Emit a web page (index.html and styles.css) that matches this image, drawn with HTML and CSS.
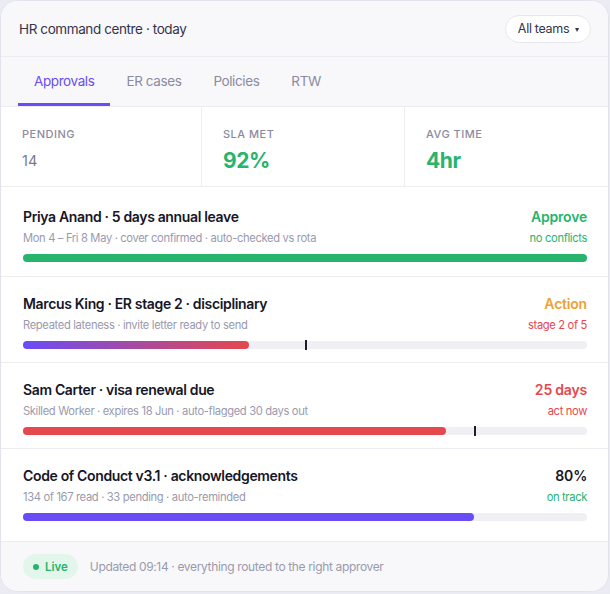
FILE: index.html
```html
<!DOCTYPE html>
<html>
<head>
  <meta charset="utf-8">
  <title>HR command centre</title>
  <link rel="stylesheet" href="styles.css">
</head>
<body>
  <div class="card">
    <div class="topbar">
      <span class="topbar-title">HR command centre · today</span>
      <button class="team-pill">All teams <span class="caret">▾</span></button>
    </div>

    <ul class="tabs">
      <li class="active">Approvals</li>
      <li>ER cases</li>
      <li>Policies</li>
      <li>RTW</li>
    </ul>

    <div class="stats">
      <div class="stat">
        <div class="stat-label">Pending</div>
        <div class="stat-value muted">14</div>
      </div>
      <div class="stat">
        <div class="stat-label">SLA met</div>
        <div class="stat-value good">92%</div>
      </div>
      <div class="stat">
        <div class="stat-label">Avg time</div>
        <div class="stat-value good">4hr</div>
      </div>
    </div>

    <div class="items">
      <div class="item">
        <div class="item-head">
          <span class="item-title">Priya Anand · 5 days annual leave</span>
          <span class="item-action green">Approve</span>
        </div>
        <div class="item-sub">
          <span>Mon 4 – Fri 8 May · cover confirmed · auto-checked vs rota</span>
          <span class="item-note green">no conflicts</span>
        </div>
        <div class="track"><div class="fill fill-green" style="width:100%"></div></div>
      </div>

      <div class="item">
        <div class="item-head">
          <span class="item-title">Marcus King · ER stage 2 · disciplinary</span>
          <span class="item-action orange">Action</span>
        </div>
        <div class="item-sub">
          <span>Repeated lateness · invite letter ready to send</span>
          <span class="item-note red">stage 2 of 5</span>
        </div>
        <div class="track">
          <div class="fill fill-grad" style="width:40%"></div>
          <div class="marker" style="left:50%"></div>
        </div>
      </div>

      <div class="item">
        <div class="item-head">
          <span class="item-title">Sam Carter · visa renewal due</span>
          <span class="item-action red">25 days</span>
        </div>
        <div class="item-sub">
          <span>Skilled Worker · expires 18 Jun · auto-flagged 30 days out</span>
          <span class="item-note red">act now</span>
        </div>
        <div class="track">
          <div class="fill fill-red" style="width:75%"></div>
          <div class="marker" style="left:80%"></div>
        </div>
      </div>

      <div class="item">
        <div class="item-head">
          <span class="item-title">Code of Conduct v3.1 · acknowledgements</span>
          <span class="item-action dark">80%</span>
        </div>
        <div class="item-sub">
          <span>134 of 167 read · 33 pending · auto-reminded</span>
          <span class="item-note green">on track</span>
        </div>
        <div class="track"><div class="fill fill-purple" style="width:80%"></div></div>
      </div>
    </div>

    <div class="footer">
      <span class="live"><span class="dot"></span>Live</span>
      <span class="footer-text">Updated 09:14 · everything routed to the right approver</span>
    </div>
  </div>
</body>
</html>
```

FILE: styles.css
```css
* {
  box-sizing: border-box;
}

body {
  margin: 0;
  background: #ebebf3;
  font-family: Inter, "Liberation Sans", sans-serif;
}

.card {
  width: 609px;
  height: 592px;
  background: #fff;
  border: 1px solid #e2e2ec;
  border-radius: 18px;
  overflow: hidden;
  display: flex;
  flex-direction: column;
}

.card > * {
  flex-shrink: 0;
}

/* header */
.topbar {
  height: 56px;
  padding: 0 17px 0 18px;
  background: #f8f8fb;
  border-bottom: 1px solid #ececf2;
  display: flex;
  align-items: center;
  justify-content: space-between;
}

.topbar-title {
  font-size: 13.5px;
  color: #34344a;
  letter-spacing: -0.4px;
}

.team-pill {
  height: 28px;
  padding: 0 11px 0 12px;
  background: #fff;
  border: 1px solid #e6e6ee;
  border-radius: 14px;
  font-family: inherit;
  font-size: 12.5px;
  letter-spacing: -0.3px;
  color: #34344a;
  display: flex;
  align-items: center;
  gap: 6px;
}

.caret {
  font-size: 8px;
}

/* tabs */
.tabs {
  list-style: none;
  margin: 0;
  padding: 0 0 0 17px;
  height: 50px;
  background: #f8f8fb;
  border-bottom: 1px solid #ececf2;
  display: flex;
}

.tabs li {
  padding: 0 16px;
  display: flex;
  align-items: center;
  font-size: 13.5px;
  letter-spacing: -0.4px;
  color: #8b8ba0;
  border-bottom: 3px solid transparent;
  padding-top: 1px;
}

.tabs li.active {
  color: #6a4cf6;
  border-bottom-color: #6a4cf6;
}

/* stats */
.stats {
  display: grid;
  grid-template-columns: 201px 203px 1fr;
  height: 80px;
  border-bottom: 1px solid #ececf2;
}

.stat {
  padding: 19px 21px 0;
  border-right: 1px solid #ececf2;
}

.stat:last-child {
  border-right: none;
}

.stat-label {
  font-size: 11px;
  font-weight: 500;
  letter-spacing: 0.5px;
  text-transform: uppercase;
  color: #8b8ba0;
  line-height: 16px;
}

.stat-value {
  margin-top: 6px;
  line-height: 26px;
}

.stat-value.muted {
  font-size: 14.5px;
  color: #7a7a8e;
}

.stat-value.good {
  font-size: 21px;
  font-weight: 700;
  color: #27b46c;
  letter-spacing: -0.4px;
}

/* work items */
.items {
  flex: 1 1 auto;
  padding: 3px 0;
  overflow: hidden;
}

.item {
  padding: 16px 21px 13px 22px;
  border-bottom: 1px solid #ececf2;
}

.item:first-child {
  padding-bottom: 14px;
}

.item:last-child {
  border-bottom: none;
}

.item-head,
.item-sub {
  display: flex;
  justify-content: space-between;
  align-items: center;
}

.item-head {
  height: 20px;
}

.item-title {
  font-size: 14px;
  font-weight: 600;
  color: #161627;
  letter-spacing: -0.35px;
}

.item-action {
  font-size: 14px;
  font-weight: 600;
  letter-spacing: -0.2px;
}

.item-sub {
  height: 16px;
  margin-top: 4px;
  font-size: 11.2px;
  letter-spacing: -0.35px;
  color: #9a9aad;
}

.item-note {
  font-size: 11.2px;
}

.green { color: #27b46c; }
.orange { color: #efa22f; }
.red { color: #e5484d; }
.dark { color: #161627; }

.track {
  position: relative;
  height: 8px;
  margin-top: 8px;
  background: #efeff4;
  border-radius: 4px;
}

.fill {
  height: 100%;
  border-radius: 4px;
}

.fill-green { background: #27b46c; }
.fill-red { background: #e5484d; }
.fill-purple { background: #6a4cf6; }
.fill-grad { background: linear-gradient(90deg, #6a4cf6, #e5484d); }

.marker {
  position: absolute;
  top: -1px;
  width: 2px;
  height: 10px;
  background: #1d1d2e;
}

/* footer */
.footer {
  height: 50px;
  background: #f8f8fb;
  border-top: 1px solid #ececf2;
  padding: 0 22px;
  display: flex;
  align-items: center;
  gap: 12px;
}

.live {
  height: 25px;
  padding: 0 10px;
  border-radius: 13px;
  background: #e3f6ec;
  color: #27b46c;
  font-size: 11.5px;
  font-weight: 600;
  display: flex;
  align-items: center;
  gap: 6px;
}

.dot {
  width: 6px;
  height: 6px;
  border-radius: 50%;
  background: #27b46c;
}

.footer-text {
  font-size: 12px;
  letter-spacing: -0.35px;
  color: #9a9aad;
}
```
